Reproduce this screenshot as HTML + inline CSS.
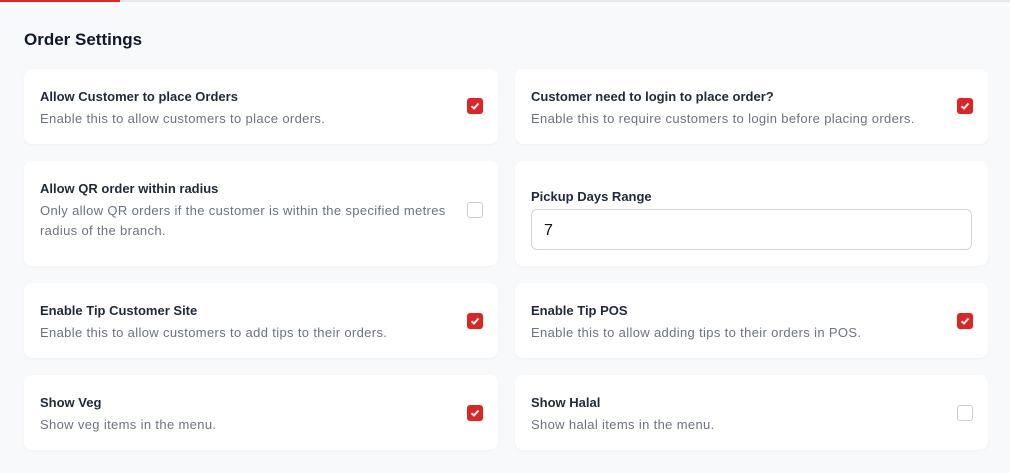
<!DOCTYPE html><html><head><style>
body{margin:0;width:1010px;height:473px;background:#f8f9fb;font-family:"Liberation Sans",sans-serif;position:relative;overflow:hidden}
.top{position:absolute;top:0;left:0;right:0;height:2px;background:#e5e7eb}
.top i{position:absolute;left:0;top:0;width:120px;height:2px;background:#dc2626}
h1{position:absolute;left:24px;top:30px;margin:0;font-size:17px;font-weight:600;color:#111827}
.c{position:absolute;background:#fff;border-radius:8px;box-shadow:0 1px 2px rgba(0,0,0,.04)}
.t{position:absolute;left:16px;font-size:13px;font-weight:bold;color:#1f2937}
.d{position:absolute;left:16px;font-size:13px;color:#6b7280;line-height:20px;width:425px;letter-spacing:0.35px}
.cb{position:absolute;right:15px;width:16px;height:16px;border-radius:3px;box-sizing:border-box}
.on{background:#dc2626}
.off{border:1px solid #c9ccd2;background:#fff}
.on svg{position:absolute;left:3px;top:3px}
</style></head><body>
<div class="top"><i></i></div>
<h1>Order Settings</h1>

<div class="c" style="left:24px;top:69px;width:474px;height:75px">
<div class="t" style="top:20px">Allow Customer to place Orders</div>
<div class="d" style="top:40px">Enable this to allow customers to place orders.</div>
<div class="cb on" style="top:29px"><svg width="10" height="10" viewBox="0 0 10 10"><path d="M1.5 5.2L4 7.5L8.5 2.5" stroke="#fff" stroke-width="2" fill="none"/></svg></div></div>

<div class="c" style="left:515px;top:69px;width:473px;height:75px">
<div class="t" style="top:20px">Customer need to login to place order?</div>
<div class="d" style="top:40px">Enable this to require customers to login before placing orders.</div>
<div class="cb on" style="top:29px"><svg width="10" height="10" viewBox="0 0 10 10"><path d="M1.5 5.2L4 7.5L8.5 2.5" stroke="#fff" stroke-width="2" fill="none"/></svg></div></div>

<div class="c" style="left:24px;top:161px;width:474px;height:105px">
<div class="t" style="top:20px">Allow QR order within radius</div>
<div class="d" style="top:40px">Only allow QR orders if the customer is within the specified metres radius of the branch.</div>
<div class="cb off" style="top:41px"></div></div>

<div class="c" style="left:515px;top:161px;width:473px;height:105px">
<div class="t" style="top:28px">Pickup Days Range</div>
<div style="position:absolute;left:16px;top:48px;width:441px;height:41px;border:1px solid #d1d5db;border-radius:6px;box-sizing:border-box;font-size:16px;color:#111;padding:12px 0 0 12px">7</div></div>

<div class="c" style="left:24px;top:283px;width:474px;height:75px">
<div class="t" style="top:20px">Enable Tip Customer Site</div>
<div class="d" style="top:40px">Enable this to allow customers to add tips to their orders.</div>
<div class="cb on" style="top:30px"><svg width="10" height="10" viewBox="0 0 10 10"><path d="M1.5 5.2L4 7.5L8.5 2.5" stroke="#fff" stroke-width="2" fill="none"/></svg></div></div>

<div class="c" style="left:515px;top:283px;width:473px;height:75px">
<div class="t" style="top:20px">Enable Tip POS</div>
<div class="d" style="top:40px">Enable this to allow adding tips to their orders in POS.</div>
<div class="cb on" style="top:30px"><svg width="10" height="10" viewBox="0 0 10 10"><path d="M1.5 5.2L4 7.5L8.5 2.5" stroke="#fff" stroke-width="2" fill="none"/></svg></div></div>

<div class="c" style="left:24px;top:375px;width:474px;height:75px">
<div class="t" style="top:20px">Show Veg</div>
<div class="d" style="top:40px">Show veg items in the menu.</div>
<div class="cb on" style="top:30px"><svg width="10" height="10" viewBox="0 0 10 10"><path d="M1.5 5.2L4 7.5L8.5 2.5" stroke="#fff" stroke-width="2" fill="none"/></svg></div></div>

<div class="c" style="left:515px;top:375px;width:473px;height:75px">
<div class="t" style="top:20px">Show Halal</div>
<div class="d" style="top:40px">Show halal items in the menu.</div>
<div class="cb off" style="top:30px"></div></div>
</body></html>
